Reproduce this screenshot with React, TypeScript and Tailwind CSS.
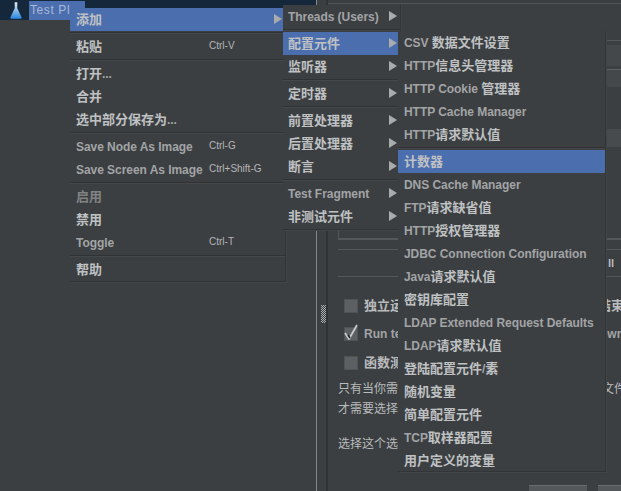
import React from 'react';

type Item = {
  label?: string;
  shortcut?: string;
  arrow?: boolean;
  active?: boolean;
  dim?: boolean;
  sep?: boolean;
};

const mainMenu: Item[] = [
  { label: '添加', arrow: true, active: true },
  { sep: true },
  { label: '粘贴', shortcut: 'Ctrl-V' },
  { sep: true },
  { label: '打开...' },
  { label: '合并' },
  { label: '选中部分保存为...' },
  { sep: true },
  { label: 'Save Node As Image', shortcut: 'Ctrl-G' },
  { label: 'Save Screen As Image', shortcut: 'Ctrl+Shift-G' },
  { sep: true },
  { label: '启用', dim: true },
  { label: '禁用' },
  { label: 'Toggle', shortcut: 'Ctrl-T' },
  { sep: true },
  { label: '帮助' },
];

const addMenu: Item[] = [
  { label: 'Threads (Users)', arrow: true },
  { sep: true },
  { label: '配置元件', arrow: true, active: true },
  { label: '监听器', arrow: true },
  { sep: true },
  { label: '定时器', arrow: true },
  { sep: true },
  { label: '前置处理器', arrow: true },
  { label: '后置处理器', arrow: true },
  { label: '断言', arrow: true },
  { sep: true },
  { label: 'Test Fragment', arrow: true },
  { label: '非测试元件', arrow: true },
];

const configMenu: Item[] = [
  { label: 'CSV 数据文件设置' },
  { label: 'HTTP信息头管理器' },
  { label: 'HTTP Cookie 管理器' },
  { label: 'HTTP Cache Manager' },
  { label: 'HTTP请求默认值' },
  { sep: true },
  { label: '计数器', active: true },
  { label: 'DNS Cache Manager' },
  { label: 'FTP请求缺省值' },
  { label: 'HTTP授权管理器' },
  { label: 'JDBC Connection Configuration' },
  { label: 'Java请求默认值' },
  { label: '密钥库配置' },
  { label: 'LDAP Extended Request Defaults' },
  { label: 'LDAP请求默认值' },
  { label: '登陆配置元件/素' },
  { label: '随机变量' },
  { label: '简单配置元件' },
  { label: 'TCP取样器配置' },
  { label: '用户定义的变量' },
];

function MenuRow({ item, textLeft }: { item: Item; textLeft: string }) {
  if (item.sep) {
    return (
      <div className="h-[4px] flex flex-col justify-center">
        <div className="h-px bg-[#303234]" />
        <div className="h-px bg-[#45484a]" />
      </div>
    );
  }
  // latin runs are drawn smaller and greyer than the chinese ones
  const parts = (item.label ?? '').split(/([\x00-\x7f]+)/).filter(Boolean);
  return (
    <div
      className={`h-[23px] pb-[2px] flex items-center whitespace-pre ${textLeft} ${
        item.active ? 'bg-[#4b6eaf]' : ''
      }`}
    >
      <span className="font-bold">
        {parts.map((p, i) =>
          /^[\x00-\x7f]/.test(p) ? (
            <span key={i} className="text-[12px] tracking-[-0.05px] text-[#a2a4a6]">
              {p}
            </span>
          ) : (
            <span key={i} className={`text-[13px] ${item.dim ? 'text-[#808284]' : 'text-[#bfc1c3]'}`}>
              {p}
            </span>
          ),
        )}
      </span>
      {item.shortcut && (
        <span className="absolute left-[139px] text-[10px] text-[#b4b6b8]">{item.shortcut}</span>
      )}
      {item.arrow && (
        <span className="ml-auto mr-[3px] w-0 h-0 border-y-[5px] border-y-transparent border-l-[8px] border-l-[#a9abad]" />
      )}
    </div>
  );
}

function Menu({ items, className, textLeft }: { items: Item[]; className: string; textLeft: string }) {
  return (
    <div className={`absolute bg-[#3c3f41] border-r border-b border-[#323436] shadow-[1px_1px_0_#424547] ${className}`}>
      {items.map((item, i) => (
        <MenuRow key={i} item={item} textLeft={textLeft} />
      ))}
    </div>
  );
}

function Checkbox({ checked, label, latin }: { checked?: boolean; label: string; latin?: boolean }) {
  return (
    <div className="h-[15px] flex items-center whitespace-nowrap pl-[6px]">
      <span className="relative w-[14px] h-[14px] shrink-0 bg-[#5d6062] border border-[#505355]">
        {checked && (
          <svg viewBox="0 0 14 16" className="absolute -left-px -top-[4px] w-[14px] h-[16px]">
            <path d="M1 9l4 6 8-14" fill="none" stroke="#c8cacc" strokeWidth="1.8" />
            <path d="M4 11l2 3" fill="none" stroke="#1e2022" strokeWidth="1.4" />
          </svg>
        )}
      </span>
      <span className={`ml-[6px] font-bold ${latin ? 'text-[12px] text-[#a2a4a6]' : 'text-[13px] text-[#b9bbbd]'}`}>
        {label}
      </span>
    </div>
  );
}

export default function App() {
  return (
    <div
      className="relative w-[621px] h-[491px] overflow-hidden flex bg-[#3b3f41] text-[#bbbbbb]"
      style={{ fontFamily: '"Liberation Sans", "Noto Sans CJK SC", sans-serif' }}
    >
      {/* tree */}
      <div className="w-[316px] shrink-0 flex flex-col">
        <div className="h-[20px] bg-[#15273a] flex items-center pl-[10px]">
          <svg viewBox="0 0 14 19" className="w-[12px] h-[19px] shrink-0">
            <defs>
              <linearGradient id="liquid" x1="0" y1="0" x2="0" y2="1">
                <stop offset="0" stopColor="#e6eef6" />
                <stop offset="1" stopColor="#2a86dc" />
              </linearGradient>
            </defs>
            <path d="M5.500 0h3v7l5 10.500q.3 1.500-1 1.500H1.500q-1.300 0-1-1.500L5.500 7z" fill="url(#liquid)" />
          </svg>
          <div className="ml-[7px] w-[56px] h-[19px] bg-[#4b6eaf] pl-[1px] text-[12px] leading-[19px] text-[#a9b8d6] tracking-[0.6px] overflow-hidden whitespace-nowrap">
            Test Pl
          </div>
        </div>
      </div>

      {/* splitter */}
      <div className="w-[12px] shrink-0 border-l border-[#85878a] border-r-2 border-r-[#303234] flex items-start">
        <svg width="5" height="18" className="ml-[4px] mt-[305px] opacity-80">
          <defs>
            <pattern id="grip" width="2" height="2" patternUnits="userSpaceOnUse">
              <rect width="1" height="1" fill="#c8cacc" />
              <rect x="1" y="1" width="1" height="1" fill="#c8cacc" />
            </pattern>
          </defs>
          <rect width="5" height="18" fill="url(#grip)" />
        </svg>
      </div>

      {/* right panel, mostly covered by the menus */}
      <div className="flex-1 min-w-0 flex flex-col pl-[10px] overflow-hidden">
        <div className="h-[30px] mt-[3px] -ml-[10px] border-t border-[#505355] flex">
          <span className="ml-[64px] mt-[11px] w-[2px] h-[16px] bg-[#c8cacc]" />
        </div>
        <div className="h-[210px] -mt-[3px] border-l border-b-2 border-[#55585a] flex flex-col items-end">
          <div className="mt-[10px] w-[15px] h-[26px] border-t border-[#55585a] pt-[4px]">
            <div className="h-[21px] bg-[#45484a]" />
          </div>
          <div className="mt-[3px] w-[15px] h-[18px] bg-[#45484a] border-t border-[#606365]" />
          <div className="mt-[42px] w-[15px] h-[18px] bg-[#484b4d]" />
        </div>
        <div className="mt-[9px] h-[28px] border-y border-[#55585a] flex justify-end items-center pr-[7px] font-bold text-[11px] text-[#b9bbbd] whitespace-nowrap">
          ll
        </div>
        <div className="mt-[21px]">
          <Checkbox label="独立运行每个线程组（例如在一个组运行结束后启动下一个）" />
        </div>
        <div className="mt-[13px]">
          <Checkbox checked latin label="Run tearDown Thread Groups after shutdown of main threads" />
        </div>
        <div className="mt-[14px]">
          <Checkbox label="函数测试模式" />
        </div>
        <div className="mt-[9px] text-[12px] leading-[20px] text-[#b9bbbd] whitespace-nowrap">
          <div>只有当你需要记录每个请求从服务器取得的数据到文件时</div>
          <div>才需要选择函数测试模式</div>
          <div className="mt-[15px]">选择这个选项很影响性能</div>
        </div>
        <div className="mt-auto h-[6px] flex justify-end gap-[11px]">
          <div className="w-[58px] bg-[#55585a] border-t border-[#6a6d6f]" />
          <div className="w-[23px] bg-[#55585a] border-t border-[#6a6d6f]" />
        </div>
      </div>

      <Menu items={mainMenu} className="left-[70px] top-[8px] w-[216px] h-[274px]" textLeft="pl-[6px]" />
      <Menu items={addMenu} className="left-[283px] top-[5px] w-[118px] h-[225px]" textLeft="pl-[5px]" />
      <Menu items={configMenu} className="left-[398px] top-[31px] w-[208px] h-[441px]" textLeft="pl-[6px]" />
    </div>
  );
}
